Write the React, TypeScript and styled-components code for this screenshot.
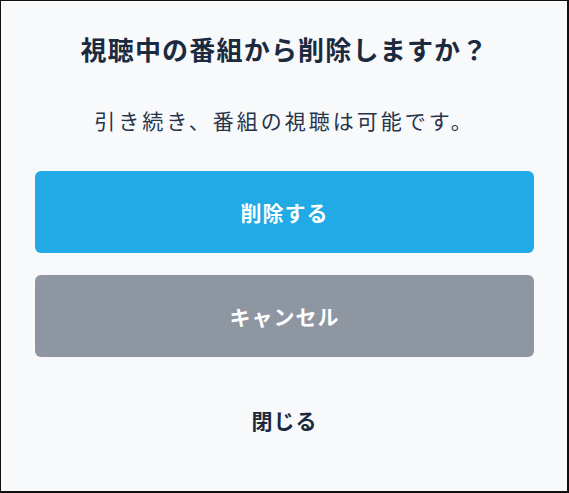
import React from "react";
import styled, { createGlobalStyle } from "styled-components";

const Global = createGlobalStyle`
  html, body { margin: 0; padding: 0; }
  body {
    font-family: "Noto Sans CJK JP", "Noto Sans", sans-serif;
    background: #f8f9fb;
  }
`;

const Frame = styled.div`
  box-sizing: border-box;
  width: 569px;
  height: 493px;
  background: #f8f9fb;
  border-style: solid;
  border-color: #111;
  border-width: 1px 2px 2px 1px;
  padding: 0 33px 0 34px;
  display: flex;
  flex-direction: column;
  align-items: stretch;
`;

const Title = styled.h2`
  margin: 30px 0 0;
  text-align: center;
  font-size: 26px;
  line-height: 36px;
  font-weight: 700;
  letter-spacing: 1.2px;
  color: #1c2a3f;
`;

const Message = styled.p`
  margin: 38px 0 0;
  text-align: center;
  font-size: 21px;
  line-height: 30px;
  font-weight: 400;
  letter-spacing: 3px;
  color: #27344a;
`;

const Actions = styled.div`
  margin-top: 36px;
  display: flex;
  flex-direction: column;
  gap: 22px;
`;

const Button = styled.button<{ $tone: "primary" | "muted" }>`
  height: 82px;
  padding: 0;
  border: none;
  border-radius: 6px;
  background: ${(p) => (p.$tone === "primary" ? "#21aae6" : "#8e96a2")};
  color: #ffffff;
  font-family: inherit;
  font-size: 21px;
  font-weight: 700;
  letter-spacing: 1px;
  cursor: pointer;
`;

const Close = styled.button`
  margin-top: 48px;
  padding: 0;
  align-self: center;
  border: none;
  background: transparent;
  font-family: inherit;
  font-size: 21px;
  line-height: 30px;
  font-weight: 700;
  letter-spacing: 1px;
  color: #1c2a3f;
  cursor: pointer;
`;

export default function App() {
  return (
    <>
      <Global />
      <Frame>
        <Title>視聴中の番組から削除しますか？</Title>
        <Message>引き続き、番組の視聴は可能です。</Message>
        <Actions>
          <Button $tone="primary">削除する</Button>
          <Button $tone="muted">キャンセル</Button>
        </Actions>
        <Close>閉じる</Close>
      </Frame>
    </>
  );
}
